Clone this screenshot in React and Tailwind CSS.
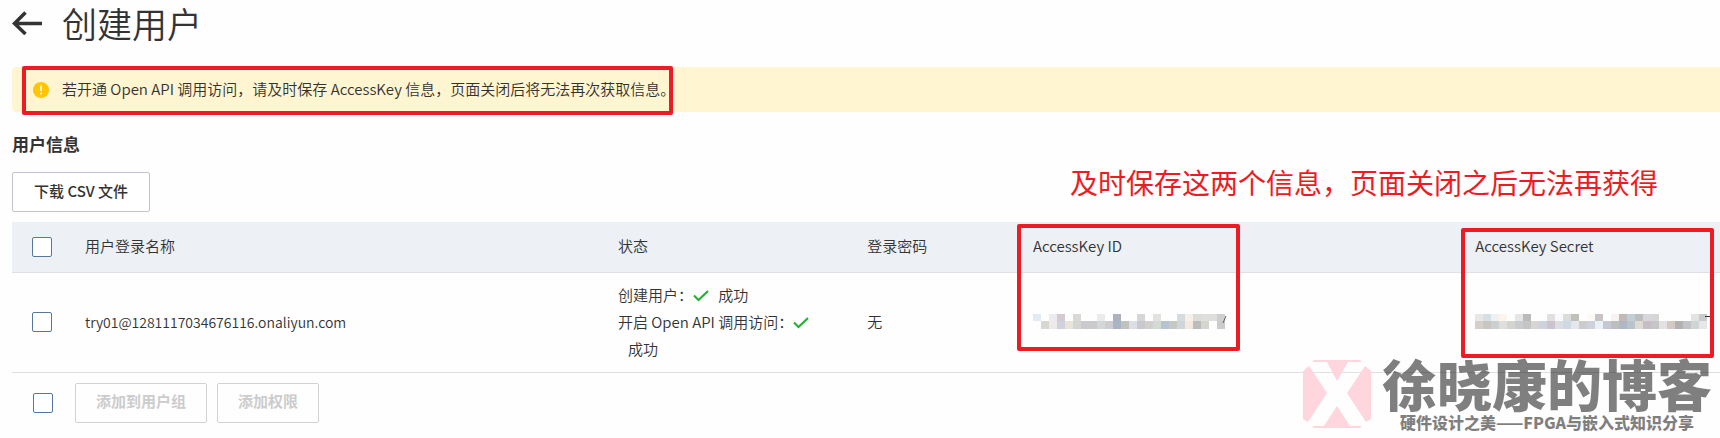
import { useState } from 'react';

const idTop = ['#e0ebf2', '', '#ecebee', '#d3cbcf', '', '#d9d9d5', '', '', '#ebebeb', '', '#b0b2bb', '', '', '#d5d7d7', '', '#e2e2de', '', '', '#d7dade', '#f5f1e8', '#dedcd8', '#dfdfdf', '#dededc', '#cfcfcf'];
const idBottom = ['', '#d8d8d2', '#f0e9ea', '#cfd2dc', '#e8e4dc', '#d5d5d3', '#cacace', '#cacacc', '#d2d8d8', '#cecccf', '#a8b5c4', '#c0c2c0', '#dcdfe6', '#cac8cf', '#d2d0ce', '#d2dad2', '#b5c4d0', '#c6c8c4', '#cfd6d6', '#f3e9e0', '#bcbcbc', '#d6d6d0', '', '#cccccc'];
const secretTop = ['#e8e6e6', '#d5dfe6', '#eff1f1', '#fdf5ea', '', '#e6e6e6', '#b8babc', '', '', '#e2dfe2', '#f7f9fd', '#dadcda', '#c0c0b8', '', '#fcf9f6', '#c8c4c6', '', '#f7f3f2', '#c2bab8', '#c0ced6', '#bebebe', '#d8d6da', '#d6d6d6', '', '', '', '', '#e3e3e3', '#c9cacd'];
const secretBottom = ['#d6cec8', '#c8c6c0', '#cbd0ce', '#dedede', '#d3d3cf', '#c9ccce', '#c5c5c4', '#d8d6d2', '#ccd3de', '#cbc4cd', '#dadee2', '#cfd9e4', '#e6e7ec', '#cccccf', '#ced0da', '#e8f0f8', '#c4c8d0', '#bebebe', '#b0b8c6', '#b8c4ca', '#dfdad4', '#c6bec4', '#c6c6c6', '#e2e2e2', '#d3c9c2', '#b3b1b2', '#c2c3c8', '#cfd5d4', '#e6e8e8'];

function MaskedKey({ top, bottom, label, children }) {
  return (
    <svg role="img" aria-label={label} width={top.length * 8 + 4} height="20" className="block">
      <g shapeRendering="crispEdges">
        {top.map((color, i) => color && <rect key={i} x={i * 8} y="2" width="8" height="7" fill={color} />)}
        {bottom.map((color, i) => color && <rect key={i} x={i * 8} y="9" width="8" height="8" fill={color} />)}
      </g>
      {children}
    </svg>
  );
}

function CheckMark() {
  return (
    <svg width="16" height="12" viewBox="0 0 16 12" className="inline-block" fill="none" stroke="#1eb22e" strokeWidth="2">
      <path d="M1 5.5 5.5 10 15 1" />
    </svg>
  );
}

function Checkbox({ label, ...props }) {
  return (
    <input
      type="checkbox"
      aria-label={label}
      className="block size-5 appearance-none rounded-[2px] border border-[#56779f] bg-white checked:bg-[#56779f]"
      {...props}
    />
  );
}

function Watermark() {
  return (
    <div className="pointer-events-none absolute right-2 bottom-[10px] flex items-end gap-[11px]">
      <svg width="68" height="68" viewBox="0 0 68 68" fill="#ffd5de">
        <path d="M11 0H57L59 2H9ZM24 2H45L34 21Z" />
        <path d="M0 11 6 6 24 33 5 62 0 59ZM68 11 62 6 44 33 63 62 68 59Z" />
        <path d="M34 46 47 66H21ZM9 66H59L57 68H11Z" />
      </svg>
      <div className="text-center font-black text-black/50">
        <p className="text-[55px] leading-[68px]">徐晓康的博客</p>
        <p className="text-base leading-3">硬件设计之美——FPGA与嵌入式知识分享</p>
      </div>
    </div>
  );
}

export default function App() {
  const [selected, setSelected] = useState(false);
  const toggle = (e) => setSelected(e.target.checked);

  return (
    <main className="relative bg-[#fefefe] pb-[15px] pl-3 font-['Noto_Sans_CJK_SC',sans-serif] text-[15px] font-[350] text-[#333]">
      <header className="flex h-[67px] items-start gap-5 pt-[3px]">
        <button type="button" aria-label="返回" className="mt-2 block">
          <svg width="30" height="24" viewBox="0 0 30 24" fill="none" stroke="#333" strokeWidth="3.5">
            <path d="M30 12.5H3M13.5 1.5 2.5 12.5 13.5 23" />
          </svg>
        </button>
        <h1 className="text-[35px] leading-10 font-[350]">创建用户</h1>
      </header>

      <div role="alert" className="relative flex h-[45px] items-center gap-[13px] rounded-l-sm bg-[#fff5d1] pl-[21px]">
        <svg width="16" height="16" viewBox="0 0 16 16">
          <circle cx="8" cy="8" r="8" fill="#ffc600" />
          <path d="M8 3.5V9M8 10.5V12.5" stroke="#fff4d1" strokeWidth="2" />
        </svg>
        <p>若开通 Open API 调用访问，请及时保存 AccessKey 信息，页面关闭后将无法再次获取信息。</p>
        <div className="absolute -top-px left-[10px] h-[49px] w-[651px] rounded-xs border-4 border-[#ed1c24]" />
      </div>

      <section>
        <h2 className="mt-5 text-[17px] leading-6 font-bold">用户信息</h2>
        <div className="mt-4 flex h-[50px] items-start justify-between">
          <button type="button" className="h-10 rounded-xs border border-[#c0c6cc] bg-white px-[21px] pb-0.5 font-medium">
            下载 CSV 文件
          </button>
          <p className="-mt-[10px] mr-[62px] text-[28px] leading-10 font-normal text-[#ed1c24]">
            及时保存这两个信息，页面关闭之后无法再获得
          </p>
        </div>

        <table className="w-full table-fixed text-left">
          <thead>
            <tr className="h-[50px] border-b border-[#dee0e4] bg-[#edf0f5]">
              <th className="w-[57px] pl-5">
                <Checkbox label="全选" checked={selected} onChange={toggle} />
              </th>
              <th className="w-[31.2%] px-4 pb-0.5 font-[350]">用户登录名称</th>
              <th className="w-[14.6%] px-4 pb-0.5 font-[350]">状态</th>
              <th className="w-[9.7%] px-4 pb-0.5 font-[350]">登录密码</th>
              <th className="w-[25.9%] px-4 pb-0.5 font-[350]">
                <div className="relative">
                  AccessKey ID
                  <div className="absolute -top-[11px] -left-4 h-[127px] w-[223px] rounded-xs border-4 border-[#ed1c24]" />
                </div>
              </th>
              <th className="px-4 pb-0.5 font-[350]">
                <div className="relative">
                  AccessKey Secret
                  <div className="absolute -top-[7px] -left-[14px] h-[130px] w-[253px] rounded-xs border-4 border-[#ed1c24]" />
                </div>
              </th>
            </tr>
          </thead>
          <tbody>
            <tr className="h-[100px] border-b border-[#dee0e4]">
              <td className="pl-5">
                <Checkbox label="选择 try01" checked={selected} onChange={toggle} />
              </td>
              <td className="px-4 text-sm">try01@1281117034676116.onaliyun.com</td>
              <td className="px-4 pb-0.5 leading-[27px]">
                <p>
                  创建用户：
                  <CheckMark /> <span className="ml-[6px]">成功</span>
                </p>
                <p>
                  开启 Open API 调用访问：
                  <CheckMark /> <span className="ml-[10px]">成功</span>
                </p>
              </td>
              <td className="px-4">无</td>
              <td className="px-4">
                <MaskedKey top={idTop} bottom={idBottom} label="AccessKey ID">
                  <path d="M193 4 190 11" stroke="#57606a" />
                </MaskedKey>
              </td>
              <td className="px-4">
                <MaskedKey top={secretTop} bottom={secretBottom} label="AccessKey Secret">
                  <path d="M230 4.5H235" stroke="#333" />
                </MaskedKey>
              </td>
            </tr>
          </tbody>
        </table>

        <div className="mt-[10px] flex items-center pl-[21px]">
          <Checkbox label="全选" checked={selected} onChange={toggle} />
          <div className="ml-[22px] flex gap-[10px] font-bold text-[#ccc]">
            <button type="button" disabled className="h-10 rounded-xs border border-[#d0d2d6] px-5 pb-0.5">
              添加到用户组
            </button>
            <button type="button" disabled className="h-10 rounded-xs border border-[#d0d2d6] px-5 pb-0.5">
              添加权限
            </button>
          </div>
        </div>
      </section>

      <Watermark />
    </main>
  );
}
